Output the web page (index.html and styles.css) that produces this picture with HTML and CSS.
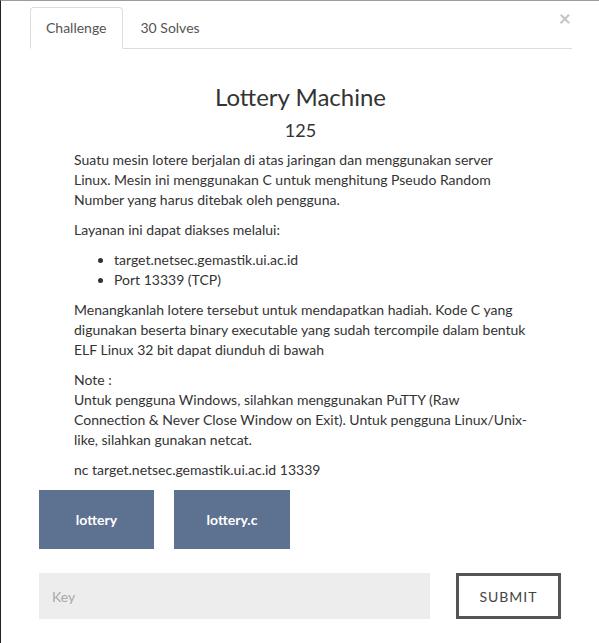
FILE: index.html
```html
<!DOCTYPE html>
<html>
<head>
<meta charset="utf-8">
<link rel="stylesheet" href="styles.css">
</head>
<body>
<div class="modal">
  <button class="close" aria-label="Close">&times;</button>
  <ul class="tabs">
    <li class="tab active">Challenge</li>
    <li class="tab">30 Solves</li>
  </ul>
  <div class="body">
    <h3 class="title">Lottery Machine</h3>
    <h4 class="value">125</h4>
    <div class="desc">
      <p>Suatu mesin lotere berjalan di atas jaringan dan menggunakan server Linux. Mesin ini menggunakan C untuk menghitung Pseudo Random Number yang harus ditebak oleh pengguna.</p>
      <p>Layanan ini dapat diakses melalui:</p>
      <ul>
        <li>target.netsec.gemastik.ui.ac.id</li>
        <li>Port 13339 (TCP)</li>
      </ul>
      <p>Menangkanlah lotere tersebut untuk mendapatkan hadiah. Kode C yang digunakan beserta binary executable yang sudah tercompile dalam bentuk ELF Linux 32 bit dapat diunduh di bawah</p>
      <p>Note :<br>Untuk pengguna Windows, silahkan menggunakan PuTTY (Raw Connection &amp; Never Close Window on Exit). Untuk pengguna Linux/Unix-like, silahkan gunakan netcat.</p>
      <p>nc target.netsec.gemastik.ui.ac.id 13339</p>
    </div>
    <div class="files">
      <a class="file">lottery</a>
      <a class="file">lottery.c</a>
    </div>
    <div class="submit-row">
      <input class="key" type="text" placeholder="Key">
      <button class="submit">SUBMIT</button>
    </div>
  </div>
</div>
</body>
</html>
```
FILE: styles.css
```css
html, body {
  margin: 0;
  padding: 0;
}
body {
  width: 599px;
  height: 643px;
  box-sizing: border-box;
  border-top: 1px solid #9c9c9c;
  border-left: 1px solid #222;
  background: #fff;
  font-family: Lato, "Open Sans", sans-serif;
  font-size: 14px;
  line-height: 20px;
  color: #333;
  overflow: hidden;
}
.modal {
  position: relative;
  padding: 6px 27px 0 29px;
}
.close {
  position: absolute;
  top: 7px;
  right: 28px;
  border: 0;
  background: none;
  padding: 0;
  font-family: Lato, sans-serif;
  font-size: 21px;
  line-height: 20px;
  font-weight: 700;
  color: #c4c4c4;
  cursor: pointer;
}
.tabs {
  list-style: none;
  margin: 0;
  padding: 0;
  display: flex;
  border-bottom: 1px solid #ddd;
  height: 41px;
}
.tab {
  padding: 10px 15px 10px 15px;
  margin-bottom: -1px;
  border: 1px solid transparent;
  border-radius: 4px 4px 0 0;
  color: #555;
  line-height: 20px;
}
.tab.active {
  border-color: #ddd #ddd #fff #ddd;
  background: #fff;
}
.tab + .tab {
  margin-left: 2px;
}
.body {
  padding: 0 10px 0 9px;
}
.title {
  margin: 35px 0 0;
  text-align: center;
  font-size: 24px;
  line-height: 26px;
  font-weight: 400;
  color: #333;
}
.value {
  margin: 10px 0 0;
  text-align: center;
  font-size: 18px;
  line-height: 20px;
  font-weight: 400;
  color: #333;
}
.desc {
  margin: 10px 0 0 35px;
  width: 454px;
}
.desc p {
  margin: 0 0 10px;
}
.desc ul {
  margin: 0 0 10px;
  padding-left: 40px;
}
.files {
  display: flex;
  gap: 20px;
  margin-top: 10px;
}
.file {
  width: 115px;
  height: 59px;
  display: flex;
  align-items: center;
  justify-content: center;
  background: #5c7290;
  color: #fff;
  font-weight: 700;
  font-size: 14px;
}
.file + .file {
  width: 116px;
}
.submit-row {
  display: flex;
  margin-top: 24px;
  gap: 26px;
}
.key {
  width: 391px;
  height: 46px;
  box-sizing: border-box;
  border: 0;
  background: #ededed;
  padding: 0 13px;
  font-family: Lato, sans-serif;
  font-size: 14px;
  color: #555;
}
.key::placeholder {
  color: #a9a9a9;
}
.submit {
  width: 105px;
  height: 46px;
  box-sizing: border-box;
  border: 3px solid #555;
  background: #fff;
  font-family: Lato, sans-serif;
  font-size: 14px;
  letter-spacing: 1px;
  color: #444;
  font-weight: 400;
}
```
